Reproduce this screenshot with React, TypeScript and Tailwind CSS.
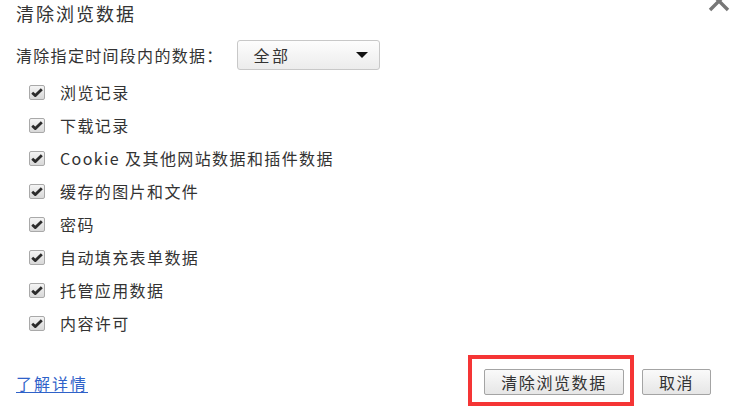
import { useState } from "react";

const fontStack = { fontFamily: '"Noto Sans CJK SC", "Noto Sans", sans-serif' }; // CJK first

const items = [ // data types that can be cleared
  "浏览记录",
  "下载记录",
  "Cookie 及其他网站数据和插件数据",
  "缓存的图片和文件",
  "密码",
  "自动填充表单数据",
  "托管应用数据",
  "内容许可",
];

const CheckBox = ({ checked, onClick }: { checked: boolean; onClick: () => void }) => ( // small chrome-style checkbox
  <button
    type="button"
    onClick={onClick}
    className="w-[16px] h-[15px] rounded-[2px] border border-[#a9a9a9] bg-gradient-to-b from-[#f4f4f4] to-[#d8d8d8] flex items-center justify-center shrink-0"
  >
    {checked ? (
      <svg width="12" height="9" viewBox="0 0 12 9">
        <path d="M1.2 4.8 L4.4 7.6 L10.8 1.2" fill="none" stroke="#2a2a2a" strokeWidth="2.8" strokeLinejoin="round" />
      </svg>
    ) : null}
  </button>
);

const App = () => {
  const [checked, setChecked] = useState<boolean[]>(items.map(() => true)); // all ticked by default

  return (
    <div className="w-[737px] h-[410px] bg-white overflow-hidden text-[#333] pl-[16px]" style={fontStack}>
      {/* header */}
      <div className="flex justify-between h-[26px]">
        <h1 className="text-[18px] leading-[26px] tracking-[2px] text-[#333] font-normal">清除浏览数据</h1>
        <svg className="-mt-[10px] mr-[7px]" width="22" height="22" viewBox="0 0 22 22">
          <path d="M2 2 L20 20 M20 2 L2 20" stroke="#777" strokeWidth="3.4" />
        </svg>
      </div>

      {/* time range */}
      <div className="mt-[14px] h-[30px] flex items-center">
        <span className="text-[16px] tracking-[1.3px] leading-[30px]">清除指定时间段内的数据：</span>
        <div className="ml-[13px] w-[143px] h-[30px] rounded-[3px] border border-[#c8c8c8] bg-gradient-to-b from-[#fdfdfd] to-[#ececec] flex items-center justify-between pl-[16px] pr-[11px]">
          <span className="text-[16px] tracking-[2.5px] leading-[28px]">全部</span>
          <svg width="12" height="6" viewBox="0 0 12 6">
            <path d="M0 0 L12 0 L6 6 Z" fill="#111" />
          </svg>
        </div>
      </div>

      {/* items */}
      <div className="mt-[6px] pl-[13px]">
        {items.map((label, i) => (
          <div key={label} className="h-[33px] flex items-center gap-[15px]">
            <CheckBox checked={checked[i]} onClick={() => setChecked(prev => prev.map((c, j) => (j === i ? !c : c)))} />
            <span className="text-[16px] tracking-[1.4px] leading-[33px]">{label}</span>
          </div>
        ))}
      </div>

      {/* footer */}
      <div className="mt-[15px] flex items-center justify-between pr-[26px]">
        <a href="#" className="text-[16px] tracking-[2px] text-[#2f62c9] underline underline-offset-2 mt-[4px]">了解详情</a>
        <div className="flex items-center gap-[8px]">
          <div className="border-4 border-[#f53535] pl-[12px] pr-[6px] pt-[10px] pb-[7px]">
            <button type="button" className="w-[140px] h-[26px] rounded-[2px] border border-[#a4a4a4] bg-gradient-to-b from-[#fafafa] to-[#e6e6e6] text-[16px] tracking-[1.6px] leading-[24px] text-[#333]">清除浏览数据</button>
          </div>
          <button type="button" className="w-[69px] h-[26px] rounded-[2px] border border-[#a4a4a4] bg-gradient-to-b from-[#fafafa] to-[#e6e6e6] text-[16px] tracking-[1.5px] leading-[24px] text-[#333] mt-[2px]">取消</button>
        </div>
      </div>
    </div>
  );
};

export default App;
